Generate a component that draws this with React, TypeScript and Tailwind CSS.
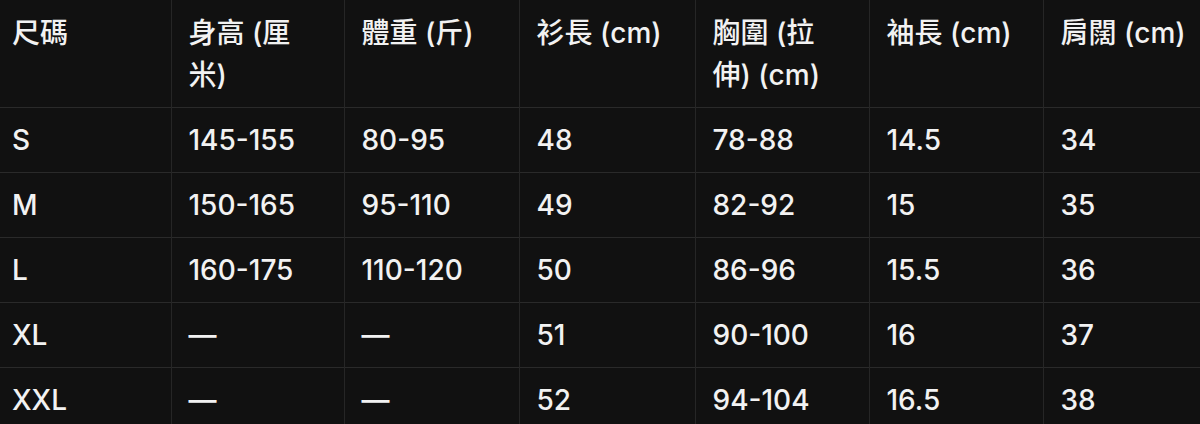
import { Fragment } from 'react';

const headers = [['尺碼'], ['身高 (厘', '米)'], ['體重 (斤)'], ['衫長 (cm)'], ['胸圍 (拉', '伸) (cm)'], ['袖長 (cm)'], ['肩闊 (cm)']];

const rows = [
  ['S', '145-155', '80-95', '48', '78-88', '14.5', '34'],
  ['M', '150-165', '95-110', '49', '82-92', '15', '35'],
  ['L', '160-175', '110-120', '50', '86-96', '15.5', '36'],
  ['XL', '—', '—', '51', '90-100', '16', '37'],
  ['XXL', '—', '—', '52', '94-104', '16.5', '38'],
];

const widths = ['w-[171px]', 'w-[173px]', 'w-[175px]', 'w-[176px]', 'w-[174px]', 'w-[174px]', 'w-[200px]'];

export default function App() {
  return (
    <div className="h-[424px] w-[1200px] overflow-hidden bg-[#111111]">
      <table
        className="w-[1243px] table-fixed border-collapse text-[28px] font-medium text-[#f2f2f2]"
        style={{ fontFamily: 'Inter, "Noto Sans CJK TC", sans-serif' }}
      >
        <colgroup>
          {widths.map((w, i) => (
            <col key={i} className={w} />
          ))}
        </colgroup>
        <thead>
          <tr className="border-b border-[#2a2a2a]">
            {headers.map((h, i) => (
              <th
                key={i}
                className={`border-r border-[#262626] pt-[12px] pb-[11px] pr-3 text-left align-top leading-[42px] font-medium whitespace-nowrap ${
                  i === 0 ? 'pl-[12px]' : 'pl-[17px]'
                }`}
              >
                {h.map((line, li) => (
                  <Fragment key={li}>
                    {li > 0 && <br />}
                    {line}
                  </Fragment>
                ))}
              </th>
            ))}
          </tr>
        </thead>
        <tbody>
          {rows.map((r, ri) => (
            <tr key={ri} className="border-b border-[#2a2a2a]">
              {r.map((c, ci) => (
                <td
                  key={ci}
                  className={`border-r border-[#262626] py-[12px] pr-3 align-top leading-[40px] ${
                    ci === 0 ? 'pl-[12px]' : 'pl-[17px]'
                  }`}
                >
                  {c}
                </td>
              ))}
            </tr>
          ))}
        </tbody>
      </table>
    </div>
  );
}
